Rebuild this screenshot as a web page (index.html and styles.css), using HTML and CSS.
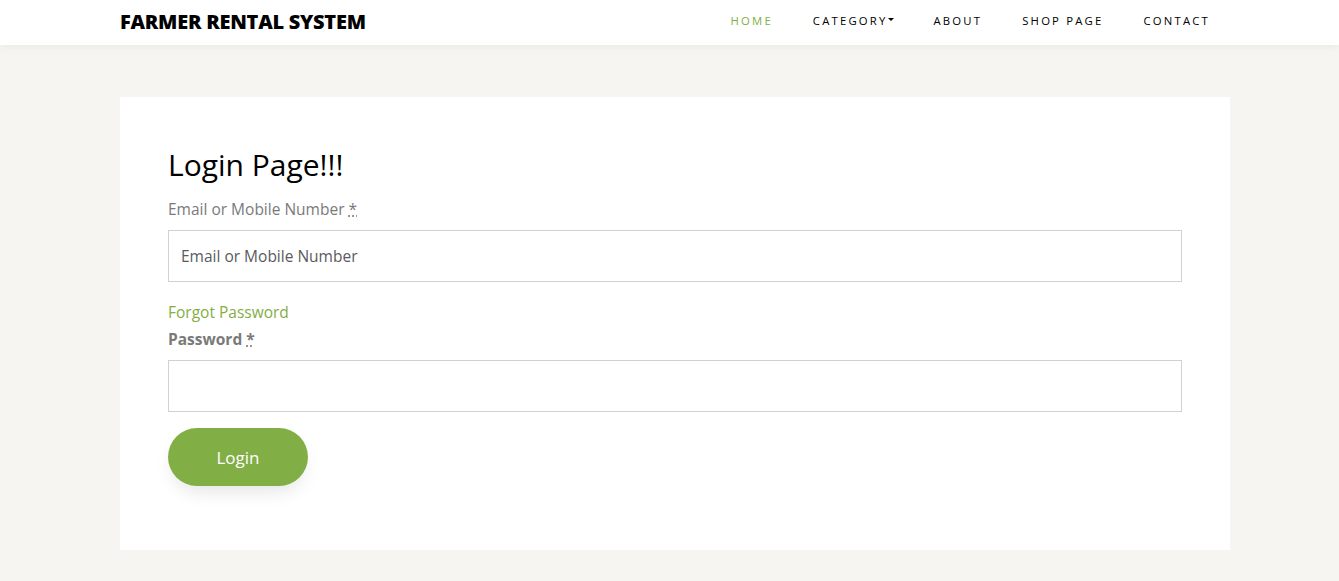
FILE: index.html
```html
<!DOCTYPE html>
<html lang="en">
<head>
<meta charset="utf-8">
<title>Farmer Rental System - Login</title>
<link rel="stylesheet" href="styles.css">
</head>
<body>
<header class="navbar">
  <div class="container nav-inner">
    <a class="brand" href="#">FARMER RENTAL SYSTEM</a>
    <nav class="nav-links">
      <a class="nav-link active" href="#">HOME</a>
      <a class="nav-link" href="#">CATEGORY<span class="caret"></span></a>
      <a class="nav-link" href="#">ABOUT</a>
      <a class="nav-link" href="#">SHOP PAGE</a>
      <a class="nav-link" href="#">CONTACT</a>
    </nav>
  </div>
</header>
<main class="page">
  <section class="container card">
    <h1 class="title">Login Page!!!</h1>
    <label class="label" for="email">Email or Mobile Number <abbr class="req" title="required">*</abbr></label>
    <input id="email" class="input" type="text" placeholder="Email or Mobile Number">
    <a class="forgot" href="#">Forgot Password</a>
    <label class="label bold" for="pw">Password <abbr class="req" title="required">*</abbr></label>
    <input id="pw" class="input" type="password">
    <button class="btn" type="button">Login</button>
  </section>
</main>
</body>
</html>
```
FILE: styles.css
```css
* { box-sizing: border-box; }
html, body { margin: 0; padding: 0; }
body {
  font-family: "Open Sans", "Noto Sans", sans-serif;
  background: #f6f5f1;
  color: #000;
}
a { text-decoration: none; }
.container { width: 1110px; margin: 0 0 0 120px; }
.navbar {
  background: #fff;
  height: 45px;
  box-shadow: 0 0 10px rgba(0,0,0,0.08);
  position: relative;
}
.nav-inner {
  display: flex;
  align-items: center;
  justify-content: space-between;
  height: 45px;
}
.brand {
  font-family: "Open Sans", sans-serif;
  font-weight: 800;
  font-size: 20px;
  color: #000;
  letter-spacing: -0.25px;
  margin-top: -2px;
}
.nav-links { display: flex; align-items: center; margin-top: -5px; }
.nav-link {
  font-size: 11.3px;
  letter-spacing: 2.2px;
  color: #000;
  padding: 0 20px;
  display: flex;
  align-items: center;
}
.nav-link.active { color: #82ae46; }
.caret {
  display: inline-block;
  width: 0; height: 0;
  border-left: 3px solid transparent;
  border-right: 3px solid transparent;
  border-top: 3px solid #000;
  margin-top: -2px;
}
.page { padding: 52px 0 31px; }
.card {
  background: #fff;
  padding: 48px 48px 64px;
  display: flex;
  flex-direction: column;
  align-items: flex-start;
}
.title {
  font-weight: 400;
  font-size: 30px;
  margin: 0 0 13px;
  line-height: 40px;
}
.label {
  font-size: 15.5px;
  color: #7a7a7a;
  line-height: 22px;
  margin-bottom: 10px;
}
.label.bold { font-weight: 700; }
.req {
  text-decoration: underline dotted;
  color: #7a7a7a;
}
.input {
  width: 100%;
  height: 52px;
  border: 1px solid #d0d0d6;
  padding: 0 12px;
  font-family: inherit;
  font-size: 15.5px;
  color: #333;
  outline: none;
}
.input::placeholder { color: #5a5a60; }
.forgot {
  color: #82ae46;
  font-size: 15.5px;
  line-height: 22px;
  margin-top: 19px;
  margin-bottom: 5px;
}
.btn {
  margin-top: 16px;
  width: 140px;
  height: 58px;
  border: none;
  border-radius: 30px;
  background: #82ae46;
  color: #fff;
  font-family: inherit;
  font-size: 17px;
  box-shadow: 0 10px 20px -6px rgba(0,0,0,0.12);
}
```
